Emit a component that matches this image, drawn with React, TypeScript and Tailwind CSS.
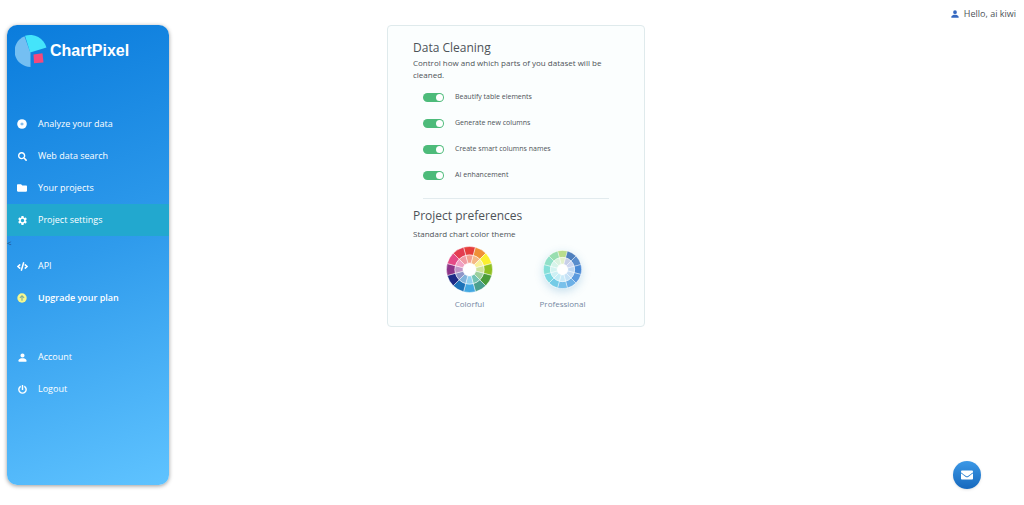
import { useState } from "react";
import type { ReactNode } from "react";
import { clsx } from "clsx";
import { FaCode, FaEnvelope, FaFolder, FaPowerOff, FaSearch } from "react-icons/fa";
import { MdSettings } from "react-icons/md";
import { BsPersonFill } from "react-icons/bs";

// --- DATA ---
const cleaningOptions = [
  "Beautify table elements",
  "Generate new columns",
  "Create smart columns names",
  "AI enhancement",
];

// Clockwise from the top segment
const colorful = {
  outer: ["#e53e3c", "#ef9136", "#fbf02f", "#8fc021", "#4a9c3a", "#4a9f8e", "#42a8e2", "#1d72b8", "#1c2a86", "#8c3488", "#e44a86", "#e33c50"],
  inner: ["#f3a08e", "#f5b884", "#f8f09a", "#cfe39a", "#9ccf9c", "#74c4b4", "#8fd0ef", "#82b4dc", "#8f96c8", "#c095c6", "#f0a0c4", "#f09aa4"],
};

const professional = {
  outer: ["#b9dc8c", "#4f80be", "#5a8dcc", "#4a8ad6", "#5c9ade", "#6cb0e6", "#78c0ea", "#74cbe6", "#7cd8e2", "#84dfd8", "#90e0c8", "#98deb0"],
  inner: ["#e2f0cc", "#c8cfe8", "#cdd6f0", "#c0d8f2", "#c4dcf4", "#c6e2f6", "#caeaf8", "#c6eef6", "#cdf0f4", "#d2f3f0", "#d6f4ea", "#daf3e0"],
};

export default function App() {
  const [theme, setTheme] = useState("Colorful");

  return (
    <div className="flex min-h-screen flex-col bg-white pb-5 font-['Open_Sans',sans-serif] text-[#4d5358]">
      <header className="flex h-[25px] items-start justify-end pt-1 pr-2">
        <a href="#account" className="flex items-center gap-1 text-[9px] leading-5">
          <BsPersonFill size={10} className="text-[#3568c0]" />
          Hello, ai kiwi
        </a>
      </header>

      <div className="flex flex-1 pl-[7px]">
        <Sidebar />

        <main className="flex-1 pl-[218px]">
          <section className="w-[258px] rounded border border-[#dfeaec] bg-[#fbfefe] px-[25px] pt-[13px] pb-4">
            <h2 className="text-[12px] leading-[18px]">Data Cleaning</h2>
            <p className="text-[8px] leading-3">
              Control how and which parts of you dataset will be cleaned.
            </p>

            <div className="mt-[3px] px-[10px]">
              {cleaningOptions.map((label) => (
                <Toggle key={label} label={label} />
              ))}
              <hr className="mt-[10px] border-[#e2ebee]" />
            </div>

            <h2 className="mt-2 text-[12px] leading-[18px]">Project preferences</h2>
            <p className="mt-[3px] text-[8px] leading-3">Standard chart color theme</p>

            <div className="grid grid-cols-2 px-[10px]">
              <ThemeButton name="Colorful" active={theme === "Colorful"} onSelect={setTheme}>
                <ColorWheel {...colorful} size={47} />
              </ThemeButton>
              <ThemeButton name="Professional" active={theme === "Professional"} onSelect={setTheme}>
                <ColorWheel {...professional} size={39} />
              </ThemeButton>
            </div>
          </section>
        </main>
      </div>

      <button
        aria-label="Contact us"
        className="fixed right-[43px] bottom-4 flex size-7 items-center justify-center rounded-full bg-linear-to-b from-[#3b98e6] to-[#1668bd] text-white shadow-sm"
      >
        <FaEnvelope size={12} />
      </button>
    </div>
  );
}

// --- SIDEBAR ---
function Sidebar() {
  return (
    <aside className="w-[162px] rounded-[10px] bg-linear-[160deg,#0a7cdc,#2f9bec_50%,#5fc3ff] text-white shadow-[0_1px_4px_rgba(0,0,0,0.4)]">
      <a href="#home" className="flex h-[51px] items-center gap-[3px] pl-2 font-['Liberation_Sans',sans-serif] text-[16px] font-bold">
        <Logo />
        ChartPixel
      </a>

      <nav className="pt-8">
        <NavItem icon={<DiscIcon />} label="Analyze your data" />
        <NavItem icon={<FaSearch size={9} />} label="Web data search" />
        <NavItem icon={<FaFolder size={10} />} label="Your projects" />
        <NavItem icon={<MdSettings size={11} />} label="Project settings" active />
        <span className="block text-[8px] leading-[14px] text-[#1f5080]">&lt;</span>
        <NavItem icon={<FaCode size={11} />} label="API" />
        <NavItem icon={<UpgradeIcon />} label="Upgrade your plan" bold />
        <div className="pt-[27px]">
          <NavItem icon={<BsPersonFill size={11} />} label="Account" />
          <NavItem icon={<FaPowerOff size={9} />} label="Logout" />
        </div>
      </nav>
    </aside>
  );
}

interface NavItemProps {
  icon: ReactNode;
  label: string;
  active?: boolean;
  bold?: boolean;
}

function NavItem({ icon, label, active, bold }: NavItemProps) {
  return (
    <a
      href="#"
      className={clsx(
        "flex h-8 items-center gap-[9px] pl-2 text-[9px]",
        active && "bg-[#22a8cf]",
        bold ? "font-semibold" : "font-normal"
      )}
    >
      <span className="flex w-[14px] justify-center">{icon}</span>
      {label}
    </a>
  );
}

function Logo() {
  return (
    <svg width="32" height="34" viewBox="0 0 32 34" aria-hidden="true">
      <path d="M9.500 2.200 A16 16 0 0 0 15.500 33 L15.500 19Z" fill="#74bff2" />
      <path d="M10 1.800 A17 17 0 0 1 31.500 13.500 L15.200 18.500Z" fill="#44e4fb" />
      <path d="M18.500 20.500 L27.500 19.200 L28.500 28.500 L19 29.200Z" fill="#f5497c" />
    </svg>
  );
}

function DiscIcon() {
  return (
    <svg width="10" height="10" viewBox="0 0 10 10" aria-hidden="true">
      <circle cx="5" cy="5" r="4.800" fill="#fff" />
      <path d="M3.400 5h3.200M5 3.600v2.800" stroke="#5fa8e4" strokeWidth="1" />
    </svg>
  );
}

function UpgradeIcon() {
  return (
    <svg width="10" height="10" viewBox="0 0 10 10" aria-hidden="true">
      <circle cx="5" cy="5" r="4.700" fill="#f4f78e" />
      <path d="M5 7.800V2.800M2.900 4.800L5 2.700l2.100 2.100" fill="none" stroke="#7fae9c" strokeWidth="1.100" />
    </svg>
  );
}

// --- PANEL PARTS ---
function Toggle({ label }: { label: string }) {
  return (
    <label className="flex h-[26px] items-center gap-[11px] text-[7px]">
      <input
        type="checkbox"
        defaultChecked
        className="flex h-[9px] w-[21px] appearance-none items-center rounded-full bg-[#b9c3c8] px-px before:size-[7px] before:rounded-full before:bg-white checked:justify-end checked:bg-[#4dbb7a]"
      />
      {label}
    </label>
  );
}

interface ThemeButtonProps {
  name: string;
  active: boolean;
  onSelect: (name: string) => void;
  children: ReactNode;
}

function ThemeButton({ name, active, onSelect, children }: ThemeButtonProps) {
  return (
    <button
      aria-pressed={active}
      onClick={() => onSelect(name)}
      className="flex flex-col items-center text-[8px] text-[#7388a3]"
    >
      <span className="flex h-[58px] items-center">
        <span className={clsx("rounded-full", !active && "shadow-[0_3px_8px_rgba(60,140,190,0.25)]")}>
          {children}
        </span>
      </span>
      <span className="leading-3">{name}</span>
    </button>
  );
}

function ringSegment(index: number, count: number, r0: number, r1: number) {
  const step = (Math.PI * 2) / count;
  const a = index * step - step / 2 - Math.PI / 2;
  const b = a + step;
  const at = (r: number, t: number) => `${50 + r * Math.cos(t)} ${50 + r * Math.sin(t)}`;
  return `M${at(r1, a)}A${r1} ${r1} 0 0 1 ${at(r1, b)}L${at(r0, b)}A${r0} ${r0} 0 0 0 ${at(r0, a)}Z`;
}

function ColorWheel({ outer, inner, size }: { outer: string[]; inner: string[]; size: number }) {
  return (
    <svg width={size} height={size} viewBox="0 0 100 100" className="block" aria-hidden="true">
      <circle cx="50" cy="50" r="49" fill="#fff" />
      {outer.map((color, i) => (
        <path key={`o${i}`} d={ringSegment(i, 12, 31, 49)} fill={color} stroke="#fff" strokeWidth="1" />
      ))}
      {inner.map((color, i) => (
        <path key={`i${i}`} d={ringSegment(i, 12, 14, 31)} fill={color} stroke="#fff" strokeWidth="1" />
      ))}
    </svg>
  );
}
